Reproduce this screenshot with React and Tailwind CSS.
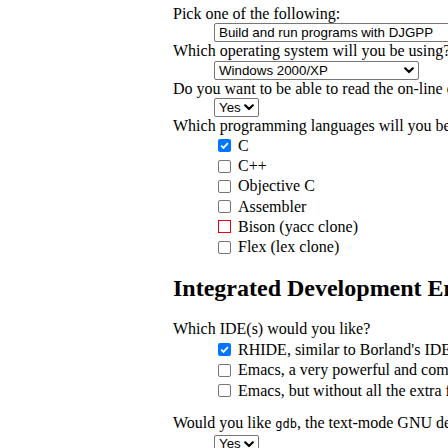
import React from 'react'

const languages = [
  { label: 'C', checked: true },
  { label: 'C++' },
  { label: 'Objective C' },
  { label: 'Assembler' },
  { label: 'Bison (yacc clone)', flagged: true },
  { label: 'Flex (lex clone)' }
]

const ides = [
  { label: "RHIDE, similar to Borland's IDE, including a built-in debugger.", checked: true },
  { label: 'Emacs, a very powerful and complete editor for programmers.' },
  { label: 'Emacs, but without all the extra features and documentation.' }
]

function Chevron() {
  return (
    <svg width="10" height="7" viewBox="0 0 10 7" className="shrink-0">
      <path d="M1.2 1.3 L5 5 L8.8 1.3" fill="none" stroke="#000" strokeWidth="2.2" strokeLinecap="round" strokeLinejoin="round" />
    </svg>
  )
}

function FakeSelect({ value, width }) {
  return (
    <div className="pl-[41px] h-[19px]">
      <div
        className="flex h-[19px] items-center justify-between rounded-[2px] border border-[#767676] bg-white pl-[4px] pr-[4px] font-['Liberation_Sans',Arial,sans-serif] text-[13.33px] leading-none text-black"
        style={{ width }}
      >
        <span>{value}</span>
        <Chevron />
      </div>
    </div>
  )
}

function CheckRow({ label, checked, flagged }) {
  return (
    <div className="flex h-[20.3px] items-center pl-[45px]">
      {flagged ? (
        <span className="inline-block h-[13px] w-[13px] shrink-0 border border-[#e8000b] bg-white" />
      ) : checked ? (
        <span className="flex h-[13px] w-[13px] shrink-0 items-center justify-center rounded-[2px] bg-[#0075ff]">
          <svg width="11" height="11" viewBox="0 0 11 11">
            <path d="M2.2 5.6 L4.5 7.9 L8.9 3.1" fill="none" stroke="#fff" strokeWidth="1.9" />
          </svg>
        </span>
      ) : (
        <span className="inline-block h-[13px] w-[13px] shrink-0 rounded-[2px] border border-[#767676] bg-white" />
      )}
      <span className="ml-[7px]">{label}</span>
    </div>
  )
}

const Line = ({ children, className = '' }) => (
  <div className={`h-[18.4px] leading-[18.4px] ${className}`}>{children}</div>
)

export default function App() {
  return (
    <main className="h-[448px] w-[448px] overflow-hidden bg-white">
      <div className="whitespace-nowrap pl-[173px] pt-[5px] font-['Liberation_Serif','Times_New_Roman',serif] text-[16px] text-black">
        <Line>Pick one of the following:</Line>
        <FakeSelect value="Build and run programs with DJGPP" width={300} />
        <Line>Which operating system will you be using?</Line>
        <FakeSelect value="Windows 2000/XP" width={205} />
        <Line>Do you want to be able to read the on-line documentation?</Line>
        <FakeSelect value="Yes" width={45} />
        <Line>Which programming languages will you be using?</Line>
        <div className="flex flex-col">
          {languages.map((l) => (
            <CheckRow key={l.label} {...l} />
          ))}
        </div>

        <h2 className="mt-[17.5px] h-[27.6px] text-[24px] font-bold leading-[27.6px]">
          Integrated Development Environments
        </h2>

        <Line className="mt-[17.5px]">Which IDE(s) would you like?</Line>
        <div className="mt-[1.5px] flex flex-col">
          {ides.map((i) => (
            <CheckRow key={i.label} {...i} />
          ))}
        </div>

        <Line className="mt-[13.5px]">
          Would you like <code className="font-['DejaVu_Sans_Mono',monospace] text-[12px]">gdb</code>, the text-mode GNU debugger?
        </Line>
        <div className="mt-[2px]">
          <FakeSelect value="Yes" width={45} />
        </div>
      </div>
    </main>
  )
}
